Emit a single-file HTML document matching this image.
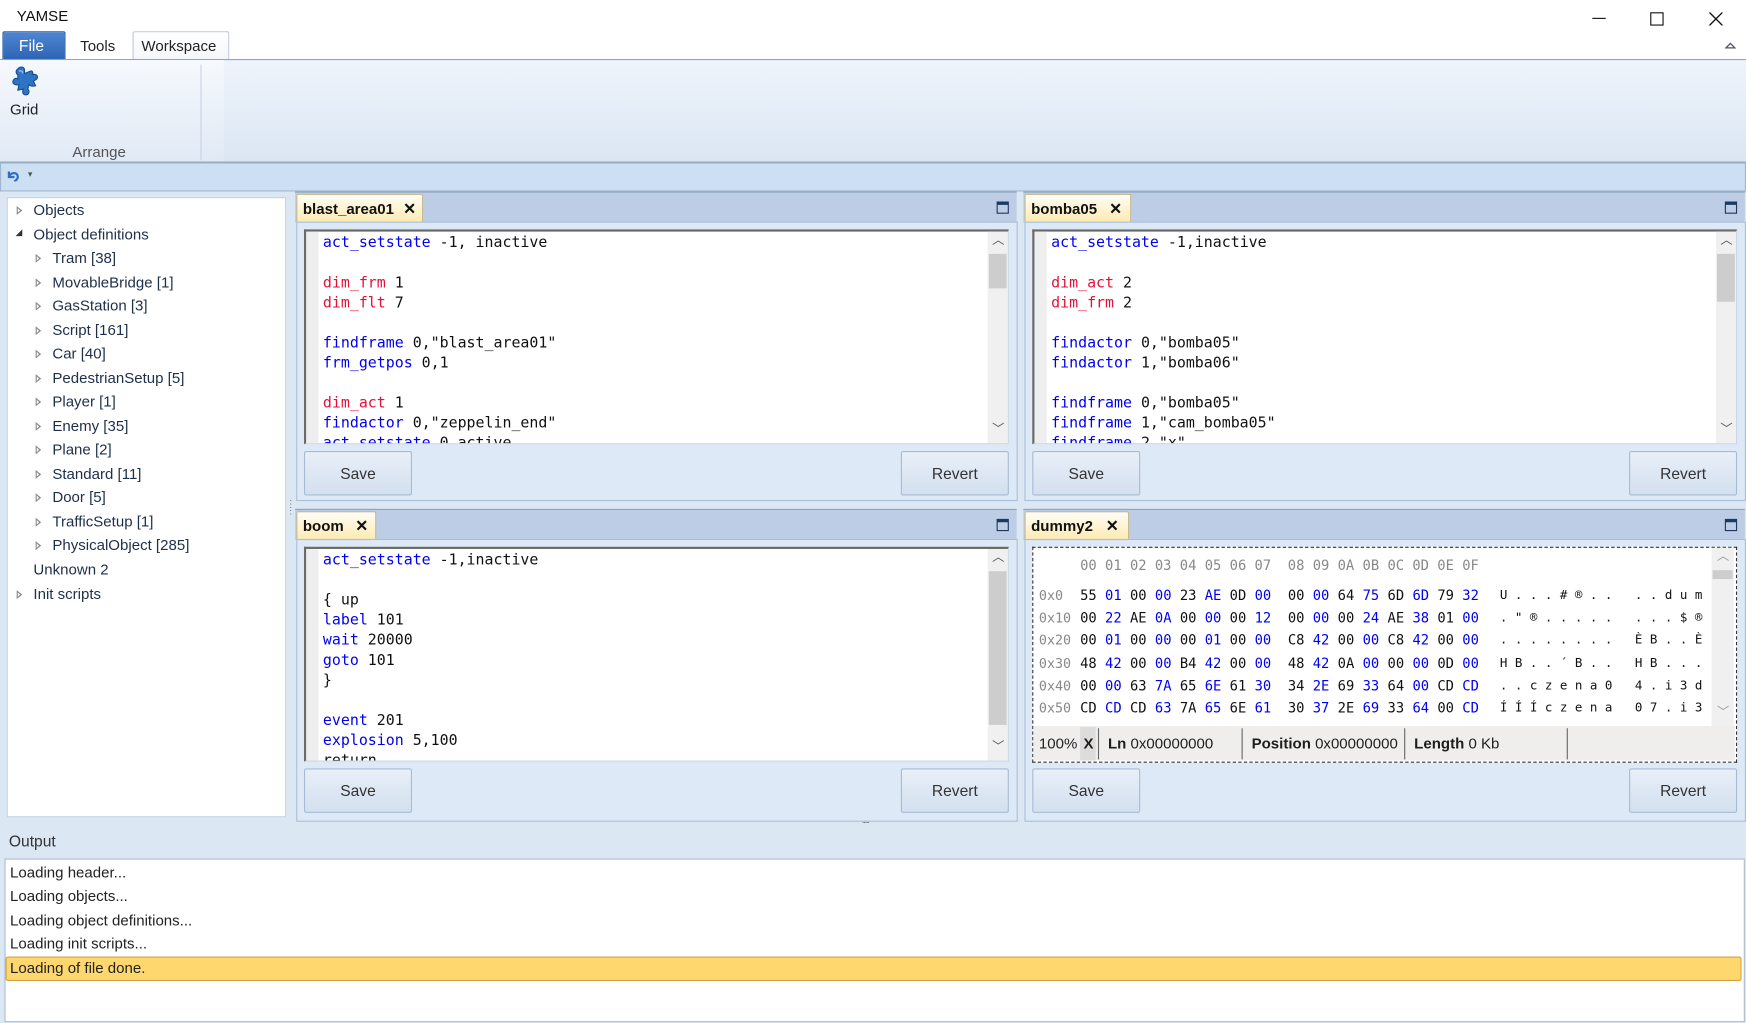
<!DOCTYPE html>
<html><head><meta charset="utf-8">
<style>
html,body{margin:0;padding:0;width:1746px;height:1023px;overflow:hidden;background:#fff}
#w{position:absolute;left:0;top:0;width:1568px;height:919px;transform:scale(1.11352);transform-origin:0 0;font-family:"Liberation Sans",sans-serif;font-size:13px;color:#1e1e1e;background:#fff}
.a{position:absolute}
.t{position:absolute;white-space:pre;line-height:1}
.panelhdr{position:absolute;background:#bccde5;border-top:1px solid #8ea4be}
.tab{position:absolute;background:linear-gradient(#fffdf6,#fdeab0);border:1px solid #c7b98a;border-bottom:none;border-radius:2px 2px 0 0;font-weight:bold;font-size:13.5px;color:#111}
.content{position:absolute;background:#dde9f6;border:1px solid #a9bfd8}
.ed{position:absolute;background:#fff;border-top:2px solid #6a6a6a;border-left:2px solid #6a6a6a;border-right:1px solid #c9d6e6;border-bottom:1px solid #c9d6e6;overflow:hidden}
.gut{position:absolute;left:0;top:0;bottom:0;width:11px;background:#eeeeee}
.code{position:absolute;left:15px;top:2px;font-family:"DejaVu Sans Mono","Liberation Mono",monospace;font-size:13.4px;line-height:18px;white-space:pre;color:#111}
.b{color:#0000ee}.r{color:#e3103a}
.sb{position:absolute;top:0;right:0;width:18px;bottom:0;background:#f0f0f0}
.th{position:absolute;left:1px;right:1px;background:#cdcdcd}
.btn{position:absolute;width:95px;height:38px;background:linear-gradient(#e8eff8,#d3e0ef);border:1px solid #a8bbd3;border-radius:2px;font-size:14px;color:#333;text-align:center;line-height:38px}
.max{position:absolute;width:9px;height:7px;border:1px solid #1d3a5e;border-top:3px solid #1d3a5e}
.tri{position:absolute;width:0;height:0;border-top:4px solid transparent;border-bottom:4px solid transparent;border-left:5px solid #8a8a8a}
.tri:after{content:"";position:absolute;left:-4px;top:-2px;border-top:2px solid transparent;border-bottom:2px solid transparent;border-left:2.5px solid #fff}
.ti{position:absolute;font-size:13.5px;color:#1e2f4a;white-space:pre;line-height:16px}
.hx{position:absolute;font-family:"DejaVu Sans Mono","Liberation Mono",monospace;font-size:12.4px;white-space:pre;line-height:14px;color:#111}
.g{color:#888}
.ol{position:absolute;left:9px;font-size:13.5px;color:#222;white-space:pre;line-height:16px}
</style></head><body><div id="w">

<div class="t" style="left:15px;top:8px;font-size:13.5px;color:#111">YAMSE</div>
<div class="a" style="left:1430px;top:16px;width:12px;height:1px;background:#111"></div>
<div class="a" style="left:1482px;top:11px;width:10px;height:10px;border:1px solid #111"></div>
<svg class="a" style="left:1535px;top:11px" width="12" height="12"><path d="M0 0L12 12M12 0L0 12" stroke="#111" stroke-width="1.2"/></svg>

<div class="a" style="left:2px;top:28px;width:55px;height:25px;background:linear-gradient(#4f86d2,#2d63b4);border:1px solid #2a5ca5;border-bottom:none;border-radius:2px 2px 0 0"></div>
<div class="t" style="left:17px;top:34px;font-size:14px;color:#fff">File</div>
<div class="t" style="left:72px;top:35px;font-size:13.5px;color:#222">Tools</div>
<div class="a" style="left:119px;top:28px;width:85px;height:26px;border:1px solid #b9c9dd;border-bottom:none;border-radius:2px 2px 0 0;background:linear-gradient(#fff,#f3f7fc)"></div>
<div class="t" style="left:127px;top:35px;font-size:13.5px;color:#222">Workspace</div>
<svg class="a" style="left:1549px;top:37px" width="10" height="8"><path d="M1 6L5 2L9 6Z" fill="none" stroke="#556" stroke-width="1.2"/></svg>

<div class="a" style="left:0;top:53px;width:1568px;height:92px;background:linear-gradient(#eef4fc,#dbe6f3);border-top:1px solid #8ea4be"></div>
<div class="a" style="left:0;top:54px;width:201px;height:91px;background:linear-gradient(#f6f9fd,#e0e9f5)"></div>
<div class="a" style="left:180px;top:58px;width:1px;height:86px;background:#c7d4e4"></div>
<svg class="a" style="left:7px;top:58px" width="30" height="30" viewBox="0 0 30 30">
<path d="M9 4 C11 1 15 2 15 5 L15 8 L20 6 C22 5 23 7 22 9 C25 8 28 10 26 13 L23 15 L25 19 C22 20 20 19 19 18 L18 22 C20 24 19 28 15 27 C13 26 13 24 14 22 L9 23 L10 18 C7 19 3 17 5 14 C6 12 8 12 9 13 L9 9 C7 8 7 5 9 4 Z" fill="#2d74c4" stroke="#1b4f8f" stroke-width="1"/>
<path d="M10 6 C12 5 14 6 13 8" stroke="#7fb3ec" stroke-width="1.5" fill="none"/></svg>
<div class="t" style="left:9px;top:92px;font-size:13.5px;color:#222">Grid</div>
<div class="t" style="left:65px;top:130px;font-size:13.5px;color:#555">Arrange</div>
<div class="a" style="left:0;top:145px;width:1568px;height:2px;background:#98adc6"></div>

<div class="a" style="left:0;top:147px;width:1566px;height:24px;background:#cddff3;border:1px solid #a0b6d0;border-top:none"></div>
<svg class="a" style="left:6px;top:152px" width="12" height="11"><path d="M2 2L2 7L7 7M2 6C5 2 10 3 10 7C10 9 8 10 7 11" fill="none" stroke="#2f6fc2" stroke-width="2"/></svg>
<div class="t" style="left:25px;top:153px;font-size:8px;color:#555">▾</div>

<div class="a" style="left:0;top:172px;width:1568px;height:568px;background:#dce7f4"></div>

<div class="a" style="left:6px;top:177px;width:249px;height:555px;background:#fff;border:1px solid #c3d1e3"></div>
<div class="tri" style="left:15px;top:185px"></div><div class="ti" style="left:30px;top:181px">Objects</div>
<div class="a" style="left:14px;top:206px;width:0;height:0;border-left:6px solid transparent;border-bottom:6px solid #333"></div><div class="ti" style="left:30px;top:203px">Object definitions</div>
<div class="tri" style="left:32px;top:228px"></div><div class="ti" style="left:47px;top:224px">Tram [38]</div>
<div class="tri" style="left:32px;top:250px"></div><div class="ti" style="left:47px;top:246px">MovableBridge [1]</div>
<div class="tri" style="left:32px;top:271px"></div><div class="ti" style="left:47px;top:267px">GasStation [3]</div>
<div class="tri" style="left:32px;top:293px"></div><div class="ti" style="left:47px;top:289px">Script [161]</div>
<div class="tri" style="left:32px;top:314px"></div><div class="ti" style="left:47px;top:310px">Car [40]</div>
<div class="tri" style="left:32px;top:336px"></div><div class="ti" style="left:47px;top:332px">PedestrianSetup [5]</div>
<div class="tri" style="left:32px;top:357px"></div><div class="ti" style="left:47px;top:353px">Player [1]</div>
<div class="tri" style="left:32px;top:379px"></div><div class="ti" style="left:47px;top:375px">Enemy [35]</div>
<div class="tri" style="left:32px;top:400px"></div><div class="ti" style="left:47px;top:396px">Plane [2]</div>
<div class="tri" style="left:32px;top:422px"></div><div class="ti" style="left:47px;top:418px">Standard [11]</div>
<div class="tri" style="left:32px;top:443px"></div><div class="ti" style="left:47px;top:439px">Door [5]</div>
<div class="tri" style="left:32px;top:465px"></div><div class="ti" style="left:47px;top:461px">TrafficSetup [1]</div>
<div class="tri" style="left:32px;top:486px"></div><div class="ti" style="left:47px;top:482px">PhysicalObject [285]</div>
<div class="ti" style="left:30px;top:504px">Unknown 2</div>
<div class="tri" style="left:15px;top:530px"></div><div class="ti" style="left:30px;top:526px">Init scripts</div>
<div class="t" style="left:260px;top:446px;font-size:8px;color:#666;line-height:3px">.<br>.<br>.<br>.<br>.</div>

<div class="panelhdr" style="left:265px;top:172px;width:648px;height:27px"></div>
<div class="tab" style="left:266px;top:174px;width:112px;height:25px"><span class="a" style="left:5px;top:5px">blast_area01</span><span class="a" style="left:95px;top:4px;font-size:14px">✕</span></div>
<div class="max" style="left:895px;top:181px"></div>
<div class="content" style="left:266px;top:199px;width:646px;height:249px"></div>
<div class="ed" style="left:273px;top:206px;width:630px;height:190px"><div class="gut"></div>
<div class="code"><span class="b">act_setstate</span> -1, inactive

<span class="r">dim_frm</span> 1
<span class="r">dim_flt</span> 7

<span class="b">findframe</span> 0,"blast_area01"
<span class="b">frm_getpos</span> 0,1

<span class="r">dim_act</span> 1
<span class="b">findactor</span> 0,"zeppelin_end"
<span class="b">act_setstate</span> 0,active</div>
<div class="sb"><div class="t" style="left:4px;top:3px;font-size:11px;color:#555">︿</div><div class="th" style="top:20px;height:31px"></div><div class="t" style="left:4px;top:173px;font-size:11px;color:#555">﹀</div></div></div>
<div class="btn" style="left:273px;top:405px">Save</div>
<div class="btn" style="left:809px;top:405px">Revert</div>

<div class="panelhdr" style="left:919px;top:172px;width:648px;height:27px"></div>
<div class="tab" style="left:920px;top:174px;width:94px;height:25px"><span class="a" style="left:5px;top:5px">bomba05</span><span class="a" style="left:75px;top:4px;font-size:14px">✕</span></div>
<div class="max" style="left:1549px;top:181px"></div>
<div class="content" style="left:920px;top:199px;width:646px;height:249px"></div>
<div class="ed" style="left:927px;top:206px;width:630px;height:190px"><div class="gut"></div>
<div class="code"><span class="b">act_setstate</span> -1,inactive

<span class="r">dim_act</span> 2
<span class="r">dim_frm</span> 2

<span class="b">findactor</span> 0,"bomba05"
<span class="b">findactor</span> 1,"bomba06"

<span class="b">findframe</span> 0,"bomba05"
<span class="b">findframe</span> 1,"cam_bomba05"
<span class="b">findframe</span> 2,"x"</div>
<div class="sb"><div class="t" style="left:4px;top:3px;font-size:11px;color:#555">︿</div><div class="th" style="top:20px;height:43px"></div><div class="t" style="left:4px;top:173px;font-size:11px;color:#555">﹀</div></div></div>
<div class="btn" style="left:927px;top:405px">Save</div>
<div class="btn" style="left:1463px;top:405px">Revert</div>

<div class="panelhdr" style="left:265px;top:457px;width:648px;height:27px"></div>
<div class="tab" style="left:266px;top:459px;width:70px;height:25px"><span class="a" style="left:5px;top:5px">boom</span><span class="a" style="left:52px;top:4px;font-size:14px">✕</span></div>
<div class="max" style="left:895px;top:466px"></div>
<div class="content" style="left:266px;top:484px;width:646px;height:252px"></div>
<div class="ed" style="left:273px;top:491px;width:630px;height:190px"><div class="gut"></div>
<div class="code"><span class="b">act_setstate</span> -1,inactive

{ up
<span class="b">label</span> 101
<span class="b">wait</span> 20000
<span class="b">goto</span> 101
}

<span class="b">event</span> 201
<span class="b">explosion</span> 5,100
return</div>
<div class="sb"><div class="t" style="left:4px;top:3px;font-size:11px;color:#555">︿</div><div class="th" style="top:20px;height:138px"></div><div class="t" style="left:4px;top:173px;font-size:11px;color:#555">﹀</div></div></div>
<div class="btn" style="left:273px;top:690px">Save</div>
<div class="btn" style="left:809px;top:690px">Revert</div>

<div class="panelhdr" style="left:919px;top:457px;width:648px;height:27px"></div>
<div class="tab" style="left:920px;top:459px;width:92px;height:25px"><span class="a" style="left:5px;top:5px">dummy2</span><span class="a" style="left:72px;top:4px;font-size:14px">✕</span></div>
<div class="max" style="left:1549px;top:466px"></div>
<div class="content" style="left:920px;top:484px;width:646px;height:252px"></div>
<div class="a" style="left:927px;top:491px;width:631px;height:192px;background:#fff;border:1px dashed #333"></div>
<div class="a" style="left:1537px;top:492px;width:20px;height:160px;background:#f0f0f0"></div>
<div class="t" style="left:1542px;top:495px;font-size:11px;color:#999">︿</div>
<div class="a" style="left:1538px;top:512px;width:18px;height:8px;background:#cdcdcd"></div>
<div class="t" style="left:1542px;top:635px;font-size:11px;color:#999">﹀</div>
<div class="hx g" style="left:970px;top:501px">00 01 02 03 04 05 06 07  08 09 0A 0B 0C 0D 0E 0F</div>
<div class="hx g" style="left:933px;top:525px;line-height:20.2px;font-size:12px">0x0
0x10
0x20
0x30
0x40
0x50</div>
<div class="hx" style="left:970px;top:525px;line-height:20.2px">55 <span class="b">01</span> 00 <span class="b">00</span> 23 <span class="b">AE</span> 0D <span class="b">00</span>  00 <span class="b">00</span> 64 <span class="b">75</span> 6D <span class="b">6D</span> 79 <span class="b">32</span>
00 <span class="b">22</span> AE <span class="b">0A</span> 00 <span class="b">00</span> 00 <span class="b">12</span>  00 <span class="b">00</span> 00 <span class="b">24</span> AE <span class="b">38</span> 01 <span class="b">00</span>
00 <span class="b">01</span> 00 <span class="b">00</span> 00 <span class="b">01</span> 00 <span class="b">00</span>  C8 <span class="b">42</span> 00 <span class="b">00</span> C8 <span class="b">42</span> 00 <span class="b">00</span>
48 <span class="b">42</span> 00 <span class="b">00</span> B4 <span class="b">42</span> 00 <span class="b">00</span>  48 <span class="b">42</span> 0A <span class="b">00</span> 00 <span class="b">00</span> 0D <span class="b">00</span>
00 <span class="b">00</span> 63 <span class="b">7A</span> 65 <span class="b">6E</span> 61 <span class="b">30</span>  34 <span class="b">2E</span> 69 <span class="b">33</span> 64 <span class="b">00</span> CD <span class="b">CD</span>
CD <span class="b">CD</span> CD <span class="b">63</span> 7A <span class="b">65</span> 6E <span class="b">61</span>  30 <span class="b">37</span> 2E <span class="b">69</span> 33 <span class="b">64</span> 00 <span class="b">CD</span></div>
<div class="hx" style="left:1347px;top:525px;line-height:20.2px;font-size:11.2px">U . . . # ® . .   . . d u m
. " ® . . . . .   . . . $ ®
. . . . . . . .   È B . . È
H B . . ´ B . .   H B . . .
. . c z e n a 0   4 . i 3 d
Í Í Í c z e n a   0 7 . i 3</div>
<div class="a" style="left:928px;top:652px;width:630px;height:31px;background:#f0eded"></div>
<div class="a" style="left:970px;top:653px;width:14px;height:30px;background:#dcdcdc"></div>
<div class="t" style="left:933px;top:661px;font-size:13.5px;color:#222">100%</div>
<div class="t" style="left:973px;top:661px;font-size:13.5px;font-weight:bold">X</div>
<div class="a" style="left:986px;top:654px;width:1px;height:28px;background:#666"></div>
<div class="t" style="left:995px;top:661px;font-size:13.5px"><b>Ln</b> 0x00000000</div>
<div class="a" style="left:1115px;top:654px;width:1px;height:28px;background:#666"></div>
<div class="t" style="left:1124px;top:661px;font-size:13.5px"><b>Position</b> 0x00000000</div>
<div class="a" style="left:1261px;top:654px;width:1px;height:28px;background:#666"></div>
<div class="t" style="left:1270px;top:661px;font-size:13.5px"><b>Length</b> 0 Kb</div>
<div class="a" style="left:1407px;top:654px;width:1px;height:28px;background:#666"></div>
<div class="btn" style="left:927px;top:690px">Save</div>
<div class="btn" style="left:1463px;top:690px">Revert</div>

<div class="t" style="left:774px;top:733px;font-size:8px;color:#666;letter-spacing:-1px">.....</div>

<div class="a" style="left:0;top:740px;width:1568px;height:179px;background:#dce7f4"></div>
<div class="t" style="left:8px;top:748px;font-size:14px;color:#333">Output</div>
<div class="a" style="left:4px;top:771px;width:1561px;height:145px;background:#fff;border:1px solid #a9bcd4"></div>
<div class="ol" style="top:776px">Loading header...</div>
<div class="ol" style="top:797px">Loading objects...</div>
<div class="ol" style="top:819px">Loading object definitions...</div>
<div class="ol" style="top:840px">Loading init scripts...</div>
<div class="a" style="left:5px;top:859px;width:1557px;height:20px;background:#fed86e;border:1px solid #d2a447;border-radius:2px"></div>
<div class="ol" style="top:862px">Loading of file done.</div>

</div></body></html>
